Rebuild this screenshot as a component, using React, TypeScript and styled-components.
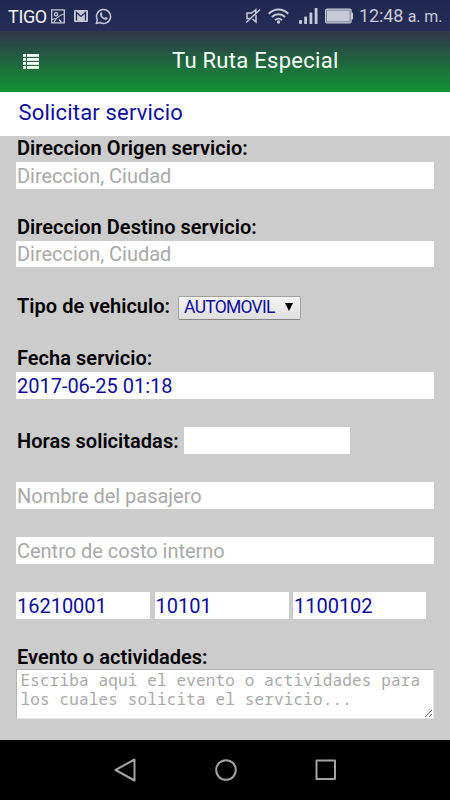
import React from "react";
import styled, { createGlobalStyle } from "styled-components";

const GlobalStyle = createGlobalStyle`
  *, *::before, *::after { box-sizing: border-box; }
  html, body { margin: 0; padding: 0; background: #000; }
  body { font-family: Roboto, "Liberation Sans", sans-serif; overflow: hidden; }
`;

const Screen = styled.div`
  width: 450px;
  height: 800px;
  display: flex;
  flex-direction: column;
  background: #cccccc;
  overflow: hidden;
`;

const StatusBar = styled.div`
  flex: 0 0 31px;
  display: flex;
  align-items: center;
  padding: 1px 8px 0 8px;
  background: linear-gradient(#1e284f, #252d58);
  color: #c7c9d6;
`;

const Carrier = styled.span`
  width: 43px;
  margin-top: 1px;
  white-space: nowrap;
  font-size: 18px;
  line-height: 22px;
  letter-spacing: -0.35px;
  color: #f4f5f8;
`;

const StatusIcon = styled.svg<{ $gap: number }>`
  display: block;
  flex: none;
  margin-left: ${(p) => p.$gap}px;
`;

const Spacer = styled.span`
  flex: 1;
`;

const Clock = styled.span`
  flex: none;
  width: 83px;
  margin: 1px 0 0 6px;
  white-space: nowrap;
  font-size: 18px;
  line-height: 22px;
  letter-spacing: -0.1px;
`;

const Meridiem = styled.span`
  font-size: 16px;
`;

const AppBar = styled.header`
  flex: 0 0 61px;
  display: flex;
  align-items: center;
  padding: 0 0 0 23px;
  background: linear-gradient(#303548 0%, #216040 45%, #129332 100%);
  border-bottom: 1px solid #138d38;
`;

const AppTitle = styled.h1`
  margin: -1px 0 0 133px;
  font-size: 22px;
  font-weight: 400;
  line-height: 28px;
  letter-spacing: 0.28px;
  white-space: nowrap;
  color: #fff;
`;

const PageTitle = styled.h2`
  flex: 0 0 44px;
  margin: 0;
  padding: 0 18.5px;
  background: #fff;
  color: #0c0c9c;
  font-size: 22px;
  font-weight: 400;
  line-height: 41px;
  letter-spacing: 0.18px;
`;

const Form = styled.form`
  flex: 1;
  min-height: 0;
  padding: 0.4px 16px 0;
`;

const Field = styled.div<{ $top?: number }>`
  margin-top: ${(p) => p.$top ?? 0}px;
`;

const Row = styled(Field)<{ $gap: number }>`
  display: flex;
  align-items: center;
  gap: ${(p) => p.$gap}px;
`;

const Label = styled.label<{ $inline?: boolean; $lift?: number }>`
  display: block;
  flex: none;
  height: ${(p) => (p.$inline ? 24 : 26)}px;
  padding-left: 1px;
  font-size: 20px;
  font-weight: 600;
  line-height: ${(p) => 24 - 2 * (p.$lift ?? 0)}px;
  letter-spacing: 0.03px;
  white-space: nowrap;
  color: #000;
`;

const Input = styled.input<{ $width?: string }>`
  display: block;
  width: ${(p) => p.$width ?? "100%"};
  height: 26.5px;
  padding: 0 1px;
  border: 0;
  border-radius: 0;
  outline: 0;
  background: #fff;
  color: #0c0c9c;
  font: 400 20px/26px Roboto, "Liberation Sans", sans-serif;
  letter-spacing: -0.02px;
  &::placeholder { color: #a9a9a9; opacity: 1; }
`;

const SelectButton = styled.button`
  display: flex;
  align-items: center;
  justify-content: space-between;
  width: 123px;
  height: 24px;
  padding: 0 7px 2px 5px;
  border: 1px solid #a0a0a0;
  border-bottom-color: #848484;
  border-radius: 2px;
  background: linear-gradient(#f5f5f5, #dedede);
  color: #0c0c9c;
  font: 400 17.5px/20px Roboto, "Liberation Sans", sans-serif;
  letter-spacing: -0.75px;
`;

const TextArea = styled.textarea`
  display: block;
  width: 100%;
  height: 50px;
  padding: 1px 4px 1px 3.5px;
  border: 1px solid #b4b4b4;
  border-right-color: #e5e5e5;
  border-bottom-color: #e5e5e5;
  outline: 0;
  resize: vertical;
  overflow: hidden;
  background: #fff;
  color: #0c0c9c;
  font: 400 16px/19px "Noto Sans Mono", "DejaVu Sans Mono", monospace;
  letter-spacing: 0.15px;
  &::placeholder { color: #a9a9a9; opacity: 1; }
`;

const NavBar = styled.nav`
  flex: 0 0 60px;
  display: flex;
  align-items: center;
  justify-content: center;
  gap: 76px;
  padding-left: 1px;
  background: #000;
`;

const PictureIcon = () => (
  <StatusIcon $gap={0} width="14" height="15" viewBox="0 0 14 15" fill="none" stroke="currentColor" strokeWidth="1.3">
    <rect x=".7" y=".9" width="12.6" height="13" />
    <circle cx="5" cy="5.200" r="1.600" />
    <path d="M3 13.500C4.500 9 8 6.500 13 5M1 10.500 4.500 9.500M8 10.500 10.500 13.500" />
  </StatusIcon>
);

const MailIcon = () => (
  <StatusIcon $gap={9} width="14" height="12" viewBox="0 0 14 12">
    <rect width="14" height="12" rx="1" fill="currentColor" />
    <path d="M2.500 10.500V2.500L7 6.500 11.500 2.500v8" fill="none" stroke="#222b54" strokeWidth="1.300" />
  </StatusIcon>
);

const WhatsAppIcon = () => (
  <StatusIcon $gap={7} width="17" height="17" viewBox="0 0 17 17">
    <path d="M1.3 15.6 2.4 11.8A7 7 0 1 1 5 14.5Z" fill="none" stroke="currentColor" strokeWidth="1.5" strokeLinejoin="round" />
    <path d="M5.2 5c.6-.8 1.3-.9 1.6-.2l.6 1.5c.1.4-.3.8-.6 1.1.7 1.3 1.6 2 2.8 2.5l.9-.9c.3-.2 2 .7 2.1 1 .1.9-1 1.9-2.2 1.8C7.7 11.5 4 8 5.2 5Z" fill="currentColor" />
  </StatusIcon>
);

const MuteIcon = () => (
  <StatusIcon $gap={0} width="16" height="16" viewBox="0 0 16 16" fill="none" stroke="currentColor" strokeWidth="1.5">
    <path d="M10.800 5.200V1.800L6.500 5H2v5.500h2.500M11 7V14L7.500 11" />
    <path d="M1.200 14.500 15 1.500" />
  </StatusIcon>
);

const WifiIcon = () => (
  <StatusIcon $gap={7} width="21" height="16" viewBox="0 0 21 16" fill="none" stroke="currentColor" strokeWidth="2">
    <path d="M.8 5.800C6.300.2 14.700.2 20.200 5.800M3.900 9C7.700 5.300 13.300 5.300 17.100 9M7 12.100C9 10.200 12 10.200 14 12.100" />
    <circle cx="10.500" cy="14" r="1.700" fill="currentColor" stroke="none" />
  </StatusIcon>
);

const SignalIcon = () => (
  <StatusIcon $gap={10} width="19" height="16" viewBox="0 0 19 16" fill="currentColor">
    <rect x="0" y="12" width="3" height="4" rx="1" />
    <rect x="5.200" y="8.500" width="2.800" height="7.500" rx=".6" />
    <rect x="10.500" y="4.500" width="2.800" height="11.500" rx=".6" />
    <rect x="15.700" y="0" width="2.800" height="16" rx=".6" />
  </StatusIcon>
);

const BatteryIcon = () => (
  <StatusIcon $gap={6} width="29" height="16" viewBox="0 0 29 16">
    <rect x="1.600" y="1.100" width="25.500" height="13.800" rx="1.500" fill="#686d89" stroke="currentColor" strokeWidth="1.200" />
    <rect x="3" y="2.500" width="22.700" height="11" fill="currentColor" />
    <rect x="27" y="4.500" width="2" height="7" rx=".7" fill="currentColor" />
  </StatusIcon>
);

const MenuIcon = () => (
  <svg width="16" height="15" viewBox="0 0 16 15" fill="#fff">
    {[0, 4, 8, 12].map((y) => (
      <g key={y}>
        <rect x="0" y={y} width="3" height="2.800" />
        <rect x="4" y={y} width="12" height="2.800" />
      </g>
    ))}
  </svg>
);

const NavIcon = ({ children }: { children: React.ReactNode }) => (
  <svg width="24" height="24" viewBox="0 0 24 24" fill="none" stroke="#a2a2a2" strokeWidth="2" strokeLinejoin="round">
    {children}
  </svg>
);

export default function App() {
  return (
    <>
      <GlobalStyle />
      <Screen>
        <StatusBar>
          <Carrier>TIGO</Carrier>
          <PictureIcon />
          <MailIcon />
          <WhatsAppIcon />
          <Spacer />
          <MuteIcon />
          <WifiIcon />
          <SignalIcon />
          <BatteryIcon />
          <Clock>
            12:48 <Meridiem>a. m.</Meridiem>
          </Clock>
        </StatusBar>
        <AppBar>
          <MenuIcon />
          <AppTitle>Tu Ruta Especial</AppTitle>
        </AppBar>
        <PageTitle>Solicitar servicio</PageTitle>
        <Form>
          <Field>
            <Label htmlFor="origen">Direccion Origen servicio:</Label>
            <Input id="origen" placeholder="Direccion, Ciudad" />
          </Field>
          <Field $top={26}>
            <Label htmlFor="destino">Direccion Destino servicio:</Label>
            <Input id="destino" placeholder="Direccion, Ciudad" />
          </Field>
          <Row $top={28.5} $gap={8}>
            <Label $inline $lift={2}>Tipo de vehiculo:</Label>
            <SelectButton type="button">
              AUTOMOVIL
              <svg width="8" height="8" viewBox="0 0 8 8">
                <path d="M0 0h8L4 8Z" fill="#000" />
              </svg>
            </SelectButton>
          </Row>
          <Field $top={26.5}>
            <Label htmlFor="fecha">Fecha servicio:</Label>
            <Input id="fecha" defaultValue="2017-06-25 01:18" />
          </Field>
          <Row $top={28.5} $gap={5}>
            <Label $inline htmlFor="horas">Horas solicitadas:</Label>
            <Input id="horas" $width="166.5px" />
          </Row>
          <Field $top={28.5}>
            <Input placeholder="Nombre del pasajero" />
          </Field>
          <Field $top={28.5}>
            <Input placeholder="Centro de costo interno" />
          </Field>
          <Row $top={28.5} $gap={4.5}>
            <Input $width="134px" defaultValue="16210001" />
            <Input $width="134px" defaultValue="10101" />
            <Input $width="133px" defaultValue="1100102" />
          </Row>
          <Field $top={24}>
            <Label htmlFor="evento" $lift={-2.5}>Evento o actividades:</Label>
            <TextArea id="evento" placeholder="Escriba aqui el evento o actividades para los cuales solicita el servicio..." />
          </Field>
        </Form>
        <NavBar>
          <NavIcon>
            <path d="M1.500 12 20.500 1.500V22.500Z" />
          </NavIcon>
          <NavIcon>
            <circle cx="12" cy="12" r="9.800" />
          </NavIcon>
          <NavIcon>
            <rect x="2.500" y="2.500" width="18.500" height="18.500" />
          </NavIcon>
        </NavBar>
      </Screen>
    </>
  );
}
